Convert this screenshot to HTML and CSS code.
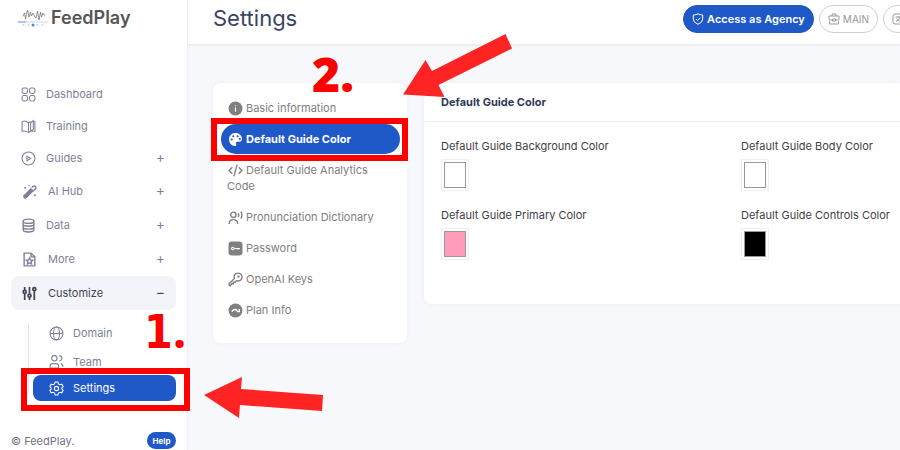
FILE: index.html
```html
<!DOCTYPE html>
<html lang="en">
<head>
<meta charset="utf-8">
<title>Settings - FeedPlay</title>
<link rel="stylesheet" href="styles.css">
</head>
<body>
<div class="app">
  <aside class="sidebar">
    <a class="logo" href="#">
      <svg class="logo-mark" width="30" height="20" viewBox="0 0 30 20" fill="none" stroke-linecap="round" stroke-linejoin="round">
        <path d="M5 8 6.500 5 7.500 11 9.500 2 11 9 12.500 4 13.500 8 15 5 16.500 8 18 10 19.500 3 21 12 22.500 4 23.500 9 25 5 26 7 27 7" stroke="#777" stroke-width=".8"/>
        <path d="M0 14H30" stroke="#b5cdf5" stroke-width=".8"/><path d="M0 14H7" stroke="#6f9eea"/>
        <path d="M5 17H6M10 17H11M19 17H20M24 17H25" stroke="#9cbcf0"/>
        <circle cx="15" cy="17" r="1.500" fill="#4f86e0" stroke="none"/>
      </svg>
      <span>FeedPlay</span>
    </a>
    <nav>
      <ul class="nav">
        <li><a class="row" href="#"><svg class="ico" viewBox="0 0 14 14"><rect x="1" y="1" width="5" height="5" rx="1.500"/><rect x="8" y="1" width="5" height="5" rx="1.500"/><rect x="1" y="8" width="5" height="5" rx="1.500"/><rect x="8" y="8" width="5" height="5" rx="1.500"/></svg><span>Dashboard</span></a></li>
        <li><a class="row" href="#"><svg class="ico" viewBox="0 0 14 14"><path d="M7 3.500Q4 1 1 2.500V11.500Q4 10.500 7 12.500ZM7 3.500 9 2.500M7 12.500 9 11.500M9 3.500 11.500 1.500V9.500L9 11.500ZM11.500 2.500H13V11.500H10"/></svg><span>Training</span></a></li>
        <li><a class="row" href="#"><svg class="ico" viewBox="0 0 14 14"><circle cx="7" cy="7" r="6"/><path d="M5.500 4.800V9.200L9 7Z"/></svg><span>Guides</span><b class="sign">+</b></a></li>
        <li><a class="row tall" href="#"><svg class="ico" viewBox="0 0 14 14"><path class="solid" d="M1.500 10.500 8.300 3.700 11.300 6.200 4 13.500Q2.800 14 1.600 13 .5 12 1.500 10.500Z"/><path class="bold" d="M9 3.500 10.300 2.200Q11.500 1.300 12.500 2.400 13.500 3.500 12.500 4.700L10.500 6.500"/><path d="M3 2.500V4.500M2 3.500H4M6.500 1V2M12 9.500V11.500M11 10.500H13"/></svg><span>AI Hub</span><b class="sign">+</b></a></li>
        <li><a class="row tall short" href="#"><svg class="ico bold" viewBox="0 0 14 14"><ellipse cx="7" cy="3" rx="5" ry="2"/><path d="M2 3V11Q2 13 7 13T12 11V3M2 5.700Q2 7.700 7 7.700T12 5.700M2 8.400Q2 10.400 7 10.400T12 8.400"/></svg><span>Data</span><b class="sign">+</b></a></li>
        <li><a class="row tall" href="#"><svg class="ico bold" viewBox="0 0 14 14"><path d="M2 1H8.500L12 4.500V13H2ZM8.500 1V4.500H12"/><path d="M7 5.500 7.900 7.400 10 7.700 8.500 9.100 8.900 11.200 7 10.200 5.100 11.200 5.500 9.100 4 7.700 6.100 7.400Z"/></svg><span>More</span><b class="sign">+</b></a></li>
        <li>
          <a class="row tall open" href="#"><svg class="ico heavy" viewBox="0 0 14 14"><path d="M2.500 1V4M2.500 7V13M7 1V7M7 11V13M11.500 5V13"/><circle cx="2.500" cy="5.500" r="1.400"/><circle cx="7" cy="9" r="1.400"/><circle cx="11.500" cy="3" r="1.400"/></svg><span>Customize</span><b class="sign">−</b></a>
          <ul class="subnav">
            <li><a class="sub" href="#"><svg class="ico" viewBox="0 0 14 14"><circle cx="7" cy="7" r="6"/><ellipse cx="7" cy="7" rx="2.800" ry="6"/><path d="M1 7H13"/></svg>Domain</a></li>
            <li><a class="sub team" href="#"><svg class="ico" viewBox="0 0 14 14"><circle cx="5" cy="4" r="2.500"/><path d="M1 13V11.500Q1 9 3.500 9H6.500Q9 9 9 11.500V13ZM9.500 1.500Q12 2 12 4T9.500 6.500M11 9Q13 9.500 13 12"/></svg>Team</a></li>
            <li class="marked"><a class="sub current" href="#"><svg class="ico" viewBox="0 0 14 14"><path d="M5.700 1H8.300L8.800 2.700 10.300 3.500 12 3 13.200 5.300 12 6.500V7.500L13.200 8.700 12 11 10.300 10.500 8.800 11.300 8.300 13H5.700L5.200 11.300 3.700 10.500 2 11 .8 8.700 2 7.500V6.500L.8 5.300 2 3 3.700 3.500 5.200 2.700Z"/><circle cx="7" cy="7" r="2"/></svg>Settings</a><i class="frame frame-one"></i></li>
          </ul>
        </li>
      </ul>
    </nav>
    <footer class="foot"><span>© FeedPlay.</span><button class="help" type="button">Help</button></footer>
  </aside>

  <main class="main">
    <header class="top">
      <h1>Settings</h1>
      <div class="actions">
        <button class="pill primary" type="button"><svg class="small" viewBox="0 0 12 12"><path d="M6 .8Q8 2 10.700 2V6Q10.700 9.500 6 11.300 1.300 9.500 1.300 6V2Q4 2 6 .8ZM4 6 5.500 7.500 8.200 4.800"/></svg>Access as Agency</button>
        <button class="pill" type="button"><svg class="small" viewBox="0 0 12 12"><path d="M4 3V1H8V3M1 3H11V6Q11 7 10 7H7.500M4.500 7H2Q1 7 1 6V3M4.500 6H7.500V8H4.500ZM1.500 8V11H10.500V8"/></svg>MAIN</button>
        <button class="pill" type="button" aria-label="Language"><svg class="small" viewBox="0 0 12 12"><rect x="1" y="1" width="10" height="10" rx="2"/><path d="M3.500 4H8.500M6 3V4M8 4Q7 7 4 8.500M4.500 5.500Q6 7.500 8.500 8.500"/></svg></button>
      </div>
    </header>
    <div class="content">
      <ul class="card tabs">
        <li><a href="#"><svg class="ico" viewBox="0 0 14 14"><circle class="solid" cx="7" cy="7" r="6.500"/><path class="cut" d="M7 6V10M7 4V5"/></svg>Basic information</a></li>
        <li class="marked"><a class="active" href="#"><svg class="ico" viewBox="0 0 14 14"><path class="solid" d="M7 1C3.500 1 1 3.500 1 7S3.500 13 6.500 13C8 13 8 12 7.500 11 7 9.500 8 9 9 9H11Q13 9 13 6.500C13 3.500 10.500 1 7 1Z"/><path class="dots" d="M3.500 7V7M5 4V4M9 4V4M11 6.500V6.500"/></svg>Default Guide Color</a><i class="frame frame-two"></i></li>
        <li><a href="#"><svg class="ico bold" viewBox="0 0 14 14"><path d="M4 4 1 7 4 10M10 4 13 7 10 10M8.500 1.500 5.500 12.500"/></svg>Default Guide Analytics Code</a></li>
        <li><a href="#"><svg class="ico bold" viewBox="0 0 14 14"><circle cx="5" cy="4.500" r="2.500"/><path d="M1 13Q1 9 5 9T9 13M9.500 3Q10.500 4.500 9.500 6.500M12 1.500Q14 4.500 12 8"/></svg>Pronunciation Dictionary</a></li>
        <li><a href="#"><svg class="ico" viewBox="0 0 14 14"><rect class="solid" x=".5" y=".5" width="13" height="13" rx="3"/><circle class="cut" cx="4.500" cy="7" r="1.200"/><path class="cut" d="M6 7H11M9 7V8M10.500 7V8"/></svg>Password</a></li>
        <li><a href="#"><svg class="ico bold" viewBox="0 0 14 14"><path d="M6 6Q5 3 7 1.700 9.500 .2 12 2 14 4.500 12.300 7 10.500 9 8 8L6.500 9.500H5V11H3.500L2 13 1 12V11Z"/><circle cx="9.800" cy="4.300" r=".5"/></svg>OpenAI Keys</a></li>
        <li><a href="#"><svg class="ico" viewBox="0 0 14 14"><circle class="solid" cx="7" cy="7" r="6.500"/><path class="cut thick" d="M3.500 8Q6 4.500 8.500 7M10.500 5.500V8H8"/></svg>Plan Info</a></li>
      </ul>
      <section class="card panel">
        <h2>Default Guide Color</h2>
        <div class="fields">
          <div class="field"><label for="bg">Default Guide Background Color</label><input id="bg" type="color" value="#ffffff"></div>
          <div class="field"><label for="body">Default Guide Body Color</label><input id="body" type="color" value="#ffffff"></div>
          <div class="field"><label for="primary">Default Guide Primary Color</label><input id="primary" type="color" value="#ff9cb9"></div>
          <div class="field"><label for="controls">Default Guide Controls Color</label><input id="controls" type="color" value="#000000"></div>
        </div>
      </section>
    </div>
  </main>

  <div class="step step-one"><span class="slab">1</span>.</div>
  <div class="step step-two">2.</div>
  <svg class="arrow arrow-one" width="120" height="44" viewBox="0 0 120 44"><path d="M0 19 38 1 37 13 119 19 118 35 36 29 35 42Z"/></svg>
  <svg class="arrow arrow-two" width="110" height="64" viewBox="0 0 110 64"><path d="M0 60.500 22.500 26 29 37 102.500 0 109 14.500 35.500 51 41.500 63Z"/></svg>
</div>
</body>
</html>
```
FILE: styles.css
```css
* { box-sizing: border-box; }
body {
  margin: 0;
  overflow: hidden;
  font: 11px/16px Inter, "Open Sans", sans-serif;
  color: #3f4047;
  background: #f7f8fb;
}
ul { list-style: none; margin: 0; padding: 0; }
a { color: inherit; text-decoration: none; }
button { font: inherit; cursor: pointer; }
svg { fill: none; stroke: currentColor; flex: none; }

.app { position: relative; display: flex; min-height: 100vh; overflow: hidden; }

.sidebar {
  width: 188px;
  flex: none;
  display: flex;
  flex-direction: column;
  padding: 8px 11px 1px;
  background: #fff;
  border-right: 1px solid #f0f1f4;
  color: #7e8299;
}
.logo {
  display: flex;
  align-items: center;
  gap: 3px;
  height: 20px;
  margin: 0 0 50px 7px;
  font-size: 18px;
  font-weight: 600;
  color: #555;
}
.row {
  display: flex;
  align-items: center;
  height: 32px;
  padding: 0 11px 0 10px;
  gap: 10px;
  border-radius: 8px;
}
.row.tall { height: 34px; padding-left: 11px; gap: 11px; }
.row.short { padding-left: 10px; gap: 10px; }
.row.open { background: #f3f4f9; color: #3f4254; }
.sign { margin-left: auto; padding-bottom: 2px; font-size: 14px; font-weight: 400; }
.ico { width: 15px; height: 15px; }
.bold { stroke-width: 1.3; }
.heavy { stroke-width: 1.6; }
.solid { fill: currentColor; stroke: none; }
.cut { stroke: #fff; }
.thick { stroke-width: 1.4; }
.dots { stroke: #1f58c7; stroke-width: 2; stroke-linecap: round; }

.subnav { position: relative; margin-top: 8px; }
.subnav::before {
  content: "";
  position: absolute;
  left: 17px;
  top: 6px;
  bottom: 8px;
  width: 1px;
  background: #e4e6ef;
}
.sub {
  display: flex;
  align-items: center;
  gap: 9px;
  height: 30px;
  margin-left: 22px;
  padding-left: 16px;
  border-radius: 8px;
}
.sub.team { height: 27px; }
.sub.current { height: 26px; background: #1f58c7; color: #fff; }
.marked { position: relative; }
.frame { position: absolute; z-index: 2; border: 6px solid #f00; pointer-events: none; }
.frame-one { inset: -7px -14px -10px 10px; }
.frame-two { inset: -6px -8px -7px -10px; }

.foot { display: flex; align-items: center; justify-content: space-between; margin-top: auto; color: #71747f; }
.help {
  width: 29px;
  height: 17px;
  padding: 0;
  border: 0;
  border-radius: 9px;
  background: #1f58c7;
  color: #fff;
  font-size: 8px;
  font-weight: 700;
}

.main { flex: 1; min-width: 0; }
.top {
  display: flex;
  justify-content: space-between;
  height: 46px;
  padding: 5px 0 0 25px;
  background: #fff;
  border-bottom: 2px solid #eeeff1;
}
h1 { margin: 0; font-size: 22px; font-weight: 400; line-height: 26px; color: #3b4463; }
.actions { display: flex; gap: 5px; margin-right: -13px; }
.pill {
  display: flex;
  align-items: center;
  gap: 3px;
  height: 28px;
  padding: 0 8px;
  border: 1px solid #cfd0d6;
  border-radius: 14px;
  background: #fff;
  color: #999;
  font-size: 10px;
}
.primary { border-color: #1f58c7; background: #1f58c7; color: #fff; font-size: 11px; font-weight: 600; }
.small { width: 12px; height: 12px; }

.content { display: flex; align-items: flex-start; gap: 17px; padding: 37px 0 0 25px; }
.card { background: #fff; border-radius: 8px; box-shadow: 0 0 4px #eceef3; }
.tabs {
  width: 194px;
  flex: none;
  display: flex;
  flex-direction: column;
  gap: 1px;
  padding: 10px 7px 18px 8px;
  color: #808080;
}
.tabs a { display: block; padding: 7px 6px; border-radius: 15px; }
.tabs .ico { margin-right: 3px; margin-left: 1px; vertical-align: -4px; }
.tabs .active { background: #1f58c7; color: #fff; font-weight: 700; }
.panel { flex: 1; min-width: 0; min-height: 221px; border-radius: 8px 0 0 8px; }
h2 {
  margin: 0;
  padding: 11px 17px;
  font-size: 11px;
  line-height: 16px;
  font-weight: 700;
  color: #2f3b59;
  border-bottom: 1px solid #f0f1f4;
}
.fields { display: grid; grid-template-columns: repeat(2, minmax(300px, 1fr)); row-gap: 16px; padding: 16px 17px; }
.field { display: flex; flex-direction: column; align-items: flex-start; gap: 5px; }
input[type="color"] {
  width: 28px;
  height: 32px;
  padding: 2px;
  border: 1px solid #f0f0f0;
  background: #fff;
  appearance: none;
}
input::-webkit-color-swatch-wrapper { padding: 0; }
input::-webkit-color-swatch { border: 1px solid #999; border-radius: 0; }

.step { position: absolute; z-index: 3; color: #f00; font: 700 48px/48px "Open Sans", sans-serif; }
.slab { font-family: "DejaVu Sans Condensed", "DejaVu Sans", sans-serif; font-size: 46px; }
.step-one { left: 144px; top: 306px; }
.step-two { left: 312px; top: 50px; font-weight: 800; }
.arrow { position: absolute; z-index: 3; fill: #ff2424; stroke: none; }
.arrow-one { left: 204px; top: 376px; }
.arrow-two { left: 403px; top: 34px; }
```
